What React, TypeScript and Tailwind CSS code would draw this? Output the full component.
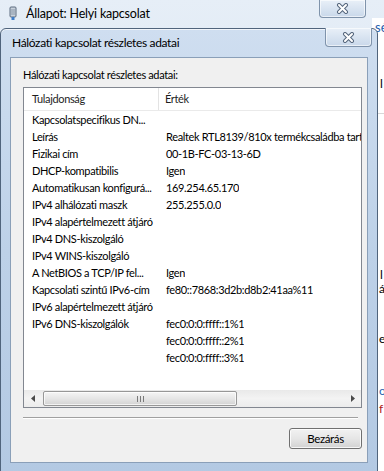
import React from 'react';

type Row = { name: string; value: string };

const ROWS: Row[] = [
  { name: 'Kapcsolatspecifikus DN...', value: '' },
  { name: 'Leírás', value: 'Realtek RTL8139/810x termékcsaládba tartozó PCI Fast Ethernet NIC' },
  { name: 'Fizikai cím', value: '00-1B-FC-03-13-6D' },
  { name: 'DHCP-kompatibilis', value: 'Igen' },
  { name: 'Automatikusan konfigurá...', value: '169.254.65.170' },
  { name: 'IPv4 alhálózati maszk', value: '255.255.0.0' },
  { name: 'IPv4 alapértelmezett átjáró', value: '' },
  { name: 'IPv4 DNS-kiszolgáló', value: '' },
  { name: 'IPv4 WINS-kiszolgáló', value: '' },
  { name: 'A NetBIOS a TCP/IP fel...', value: 'Igen' },
  { name: 'Kapcsolati szintű IPv6-cím', value: 'fe80::7868:3d2b:d8b2:41aa%11' },
  { name: 'IPv6 alapértelmezett átjáró', value: '' },
  { name: 'IPv6 DNS-kiszolgálók', value: 'fec0:0:0:ffff::1%1' },
  { name: '', value: 'fec0:0:0:ffff::2%1' },
  { name: '', value: 'fec0:0:0:ffff::3%1' },
];

const CloseGlyph = () => (
  <svg width="13" height="11" viewBox="0 0 13 11">
    <path d="M3 2 L10 9 M10 2 L3 9" stroke="#56677d" strokeWidth="4" strokeLinecap="round" />
    <path d="M3 2 L10 9 M10 2 L3 9" stroke="#ffffff" strokeWidth="2" strokeLinecap="round" />
  </svg>
);

const CloseButton = ({ className }: { className: string }) => (
  <div
    className={`flex items-center justify-center border border-[#7f93ab] border-t-0 rounded-b-[4px] bg-gradient-to-b from-[#e9f0f8] to-[#c9d8ea] shadow-[inset_0_0_0_1px_rgba(255,255,255,0.6)] ${className}`}
  >
    <CloseGlyph />
  </div>
);

const NetIcon = () => (
  <svg width="10" height="16" viewBox="0 0 10 16">
    <rect x="2" y="1" width="6" height="10" rx="1" fill="#c9d2dc" stroke="#5b6b7e" />
    <path d="M4 3 V9 M6 3 V9" stroke="#8796a8" />
    <rect x="3.5" y="11" width="3" height="3" fill="#3f7ec9" />
  </svg>
);

const Arrow = ({ dir }: { dir: 'left' | 'right' }) => (
  <svg width="4" height="7" viewBox="0 0 4 7">
    <path d={dir === 'left' ? 'M4 0 L0 3.5 L4 7 Z' : 'M0 0 L4 3.5 L0 7 Z'} fill="#4a4a4a" />
  </svg>
);

export default function App() {
  return (
    <div className="relative w-[384px] h-[471px] overflow-hidden bg-gradient-to-b from-[#e6eef7] to-[#c7d8eb] font-['Lato','Liberation_Sans',sans-serif] text-black">
      {/* back window title bar */}
      <div className="flex items-center h-[27px] pl-[8px] gap-[8px]">
        <NetIcon />
        <span className="text-[12.5px] tracking-[-0.2px] leading-none pt-[1px]">Állapot: Helyi kapcsolat</span>
      </div>
      <CloseButton className="absolute left-[319px] top-0 w-[47px] h-[18px]" />

      {/* back window content peeking on the right */}
      <div className="absolute left-[372px] top-[18px] right-0 bottom-0 bg-white flex flex-col pl-[3px] text-[12px] leading-[14px] overflow-hidden">
        <span className="mt-[2px] text-[#1f5fb0] text-[13px]">sé</span>
        <span className="mt-[43px] pl-[5px]">l</span>
        <div className="mt-[22px] h-px bg-[#d8d8d8]" />
        <span className="mt-[154px] pl-[5px]">l</span>
        <span className="pl-[4px]">á</span>
        <span className="mt-[36px] pl-[4px]">e</span>
        <span className="mt-[38px] pl-[4px] text-[#1f5fb0]">o</span>
        <span className="mt-[4px] pl-[4px] text-[#b0201a]">f</span>
      </div>

      {/* front dialog */}
      <div className="absolute left-0 top-[28px] w-[378px] h-[447px] rounded-t-[6px] border border-[#50647c] bg-gradient-to-b from-[#cfdef0] via-[#bdd1e8] to-[#b3c9e3] flex flex-col shadow-[inset_0_1px_0_rgba(255,255,255,0.7)]">
        <div className="relative h-[28px] flex items-center pl-[11px]">
          <span className="text-[12px] tracking-[-0.35px] leading-none">Hálózati kapcsolat részletes adatai</span>
          <CloseButton className="absolute left-[324px] top-[-1px] w-[47px] h-[19px]" />
        </div>

        <div className="ml-[9px] mr-[9px] h-[406px] border border-[#8a9fb8] bg-[#f0f0f0] flex flex-col text-[11px] tracking-[-0.35px]">
          <div className="pl-[12px] pt-[9px] leading-[16px]">Hálózati kapcsolat részletes adatai:</div>

          <div className="ml-[12px] mt-[4px] w-[339px] h-[321px] border border-[#828790] bg-white flex flex-col">
            <div className="flex h-[23px] border-b border-[#eaeaea] text-[#1e1e1e]">
              <div className="w-[135px] border-r border-[#e3e3e3] pl-[8px] flex items-center">Tulajdonság</div>
              <div className="pl-[6px] flex items-center">Érték</div>
            </div>
            <div className="flex-1 flex flex-col overflow-hidden">
              {ROWS.map((r, i) => (
                <div key={i} className="flex h-[17px] items-center leading-[17px] whitespace-nowrap">
                  <div className="w-[136px] shrink-0 pl-[8px] overflow-hidden">{r.name}</div>
                  <div className="pl-[6px] overflow-hidden">{r.value}</div>
                </div>
              ))}
            </div>
            <div className="flex items-center h-[17px] bg-gradient-to-b from-[#e9e9e9] via-[#f3f3f3] to-[#ececec]">
              <div className="w-[17px] h-full flex items-center justify-center">
                <Arrow dir="left" />
              </div>
              <div className="ml-[2px] w-[194px] h-[15px] rounded-[2px] border border-[#979797] bg-gradient-to-b from-[#f5f5f5] via-[#e6e6e6] to-[#d3d3d3] flex items-center justify-center gap-[2px] shadow-[inset_0_0_0_1px_rgba(255,255,255,0.7)]">
                <div className="w-px h-[6px] bg-[#7a7a7a]" />
                <div className="w-px h-[6px] bg-[#7a7a7a]" />
                <div className="w-px h-[6px] bg-[#7a7a7a]" />
              </div>
              <div className="flex-1" />
              <div className="w-[17px] h-full flex items-center justify-center">
                <Arrow dir="right" />
              </div>
            </div>
          </div>

          <div className="ml-[12px] mt-[9px] w-[335px] h-px bg-[#a0a0a0] border-b border-white box-content" />

          <div className="flex justify-end mr-[5px] mt-[9px]">
            <button className="w-[73px] h-[21px] rounded-[3px] border border-[#707070] bg-gradient-to-b from-[#f2f2f2] via-[#e6e6e6] to-[#d2d2d2] shadow-[inset_0_0_0_1px_rgba(255,255,255,0.8)] text-[11.5px] leading-none">
              Bezárás
            </button>
          </div>
        </div>
      </div>
    </div>
  );
}
